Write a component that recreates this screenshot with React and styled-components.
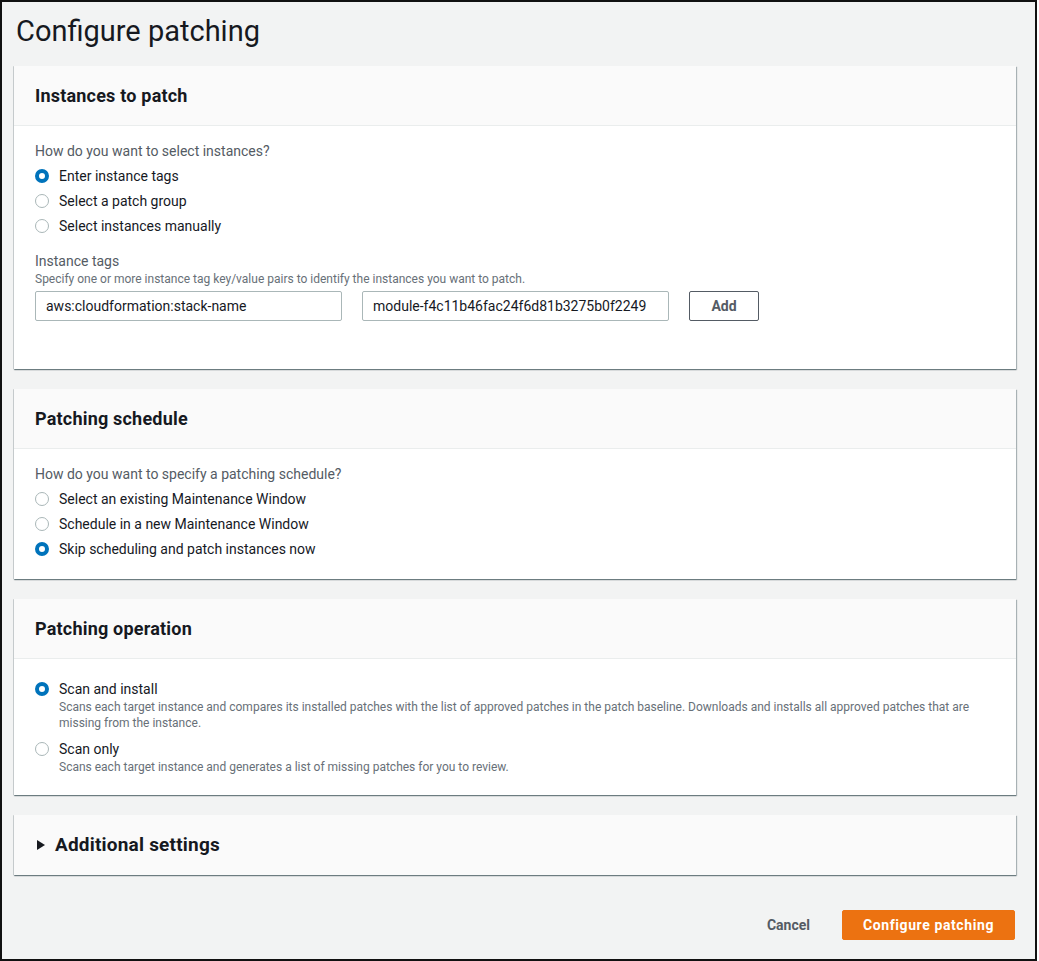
import styled, { createGlobalStyle } from "styled-components";

const Global = createGlobalStyle`
  html, body {
    margin: 0;
    padding: 0;
    background: #fff;
  }
  * {
    box-sizing: border-box;
  }
`;

const Frame = styled.div`
  width: 1037px;
  height: 961px;
  border: 2px solid #111;
  background: #f2f3f3;
  padding: 11px 19px 0 12px;
  font-family: Roboto, "Noto Sans", sans-serif;
  color: #16191f;
`;

const Title = styled.h1`
  margin: 0 0 17px 2px;
  font-size: 29px;
  line-height: 36px;
  font-weight: 400;
  color: #16191f;
`;

const Card = styled.section`
  background: #fff;
  margin-bottom: 20px;
  box-shadow: 0 1px 1px 0 rgba(0, 28, 36, 0.4), 1px 1px 1px 0 rgba(0, 28, 36, 0.25),
    -1px 0 0 0 rgba(0, 28, 36, 0.12);
`;

const CardHeader = styled.div`
  display: flex;
  align-items: center;
  gap: 10px;
  height: 60px;
  padding: 0 20px 0 21px;
  background: #fafafa;
  border-bottom: ${(p) => (p.$only ? "none" : "1px solid #eaeded")};
  font-size: ${(p) => (p.$only ? "19px" : "18px")};
  letter-spacing: 0.2px;
  font-weight: 700;
  line-height: 20px;
  color: #16191f;
`;

const Caret = styled.span`
  width: 0;
  height: 0;
  margin-left: 2px;
  border-top: 5px solid transparent;
  border-bottom: 5px solid transparent;
  border-left: 8px solid #16191f;
`;

const CardBody = styled.div`
  padding: 15px 20px ${(p) => p.$bottom || "20px"} 21px;
  font-size: 14px;
  line-height: 20px;
`;

const Question = styled.div`
  color: #545b64;
  height: ${(p) => (p.$empty ? "0" : "20px")};
`;

const RadioRow = styled.label`
  display: flex;
  align-items: flex-start;
  gap: 10px;
  margin-top: ${(p) => p.$gap || "5px"};
  color: #16191f;
`;

const Dot = styled.span`
  flex: none;
  width: 14px;
  height: 14px;
  margin-top: 3px;
  border-radius: 50%;
  background: #fff;
  border: ${(p) => (p.$on ? "4px solid #0073bb" : "1px solid #aab7b8")};
`;

const Desc = styled.div`
  font-size: 12px;
  line-height: 16px;
  color: #687078;
`;

const FieldLabel = styled.div`
  margin-top: 15px;
  color: #545b64;
`;

const TagRow = styled.div`
  display: flex;
  gap: 20px;
  margin-top: 4px;
`;

const Input = styled.div`
  width: 307px;
  height: 30px;
  padding: 4px 10px;
  border: 1px solid #aab7b8;
  border-radius: 2px;
  background: #fff;
  color: #16191f;
  font-size: 14px;
  line-height: 20px;
  white-space: nowrap;
  overflow: hidden;
`;

const AddButton = styled.button`
  width: 70px;
  height: 30px;
  border: 1px solid #545b64;
  border-radius: 2px;
  background: #fff;
  color: #545b64;
  font-family: inherit;
  font-size: 14px;
  font-weight: 700;
`;

const Footer = styled.div`
  display: flex;
  justify-content: flex-end;
  align-items: center;
  gap: 12px;
  margin-top: 35px;
  padding-right: 1px;
`;

const LinkButton = styled.button`
  border: none;
  background: none;
  padding: 4px 20px;
  font-family: inherit;
  font-size: 14px;
  font-weight: 700;
  line-height: 20px;
  color: #545b64;
`;

const Primary = styled.button`
  height: 30px;
  width: 173px;
  border: 1px solid #ec7211;
  border-radius: 2px;
  background: #ec7211;
  color: #fff;
  font-family: inherit;
  font-size: 14px;
  font-weight: 700;
  letter-spacing: 0.6px;
  line-height: 20px;
`;

function Radio({ on, label, desc, gap }) {
  return (
    <RadioRow $gap={gap}>
      <Dot $on={on} />
      <div>
        <div>{label}</div>
        {desc && <Desc>{desc}</Desc>}
      </div>
    </RadioRow>
  );
}

export default function App() {
  return (
    <Frame>
      <Global />
      <Title>Configure patching</Title>

      <Card>
        <CardHeader>Instances to patch</CardHeader>
        <CardBody $bottom="48px">
          <Question>How do you want to select instances?</Question>
          <Radio on label="Enter instance tags" />
          <Radio label="Select a patch group" />
          <Radio label="Select instances manually" />
          <FieldLabel>Instance tags</FieldLabel>
          <Desc>Specify one or more instance tag key/value pairs to identify the instances you want to patch.</Desc>
          <TagRow>
            <Input>aws:cloudformation:stack-name</Input>
            <Input>module-f4c11b46fac24f6d81b3275b0f2249</Input>
            <AddButton>Add</AddButton>
          </TagRow>
        </CardBody>
      </Card>

      <Card>
        <CardHeader>Patching schedule</CardHeader>
        <CardBody>
          <Question>How do you want to specify a patching schedule?</Question>
          <Radio label="Select an existing Maintenance Window" />
          <Radio label="Schedule in a new Maintenance Window" />
          <Radio on label="Skip scheduling and patch instances now" />
        </CardBody>
      </Card>

      <Card>
        <CardHeader>Patching operation</CardHeader>
        <CardBody>
          <Question $empty />
          <Radio
            on
            gap="5px"
            label="Scan and install"
            desc="Scans each target instance and compares its installed patches with the list of approved patches in the patch baseline. Downloads and installs all approved patches that are missing from the instance."
          />
          <Radio
            gap="8px"
            label="Scan only"
            desc="Scans each target instance and generates a list of missing patches for you to review."
          />
        </CardBody>
      </Card>

      <Card>
        <CardHeader $only>
          <Caret />
          Additional settings
        </CardHeader>
      </Card>

      <Footer>
        <LinkButton>Cancel</LinkButton>
        <Primary>Configure patching</Primary>
      </Footer>
    </Frame>
  );
}
